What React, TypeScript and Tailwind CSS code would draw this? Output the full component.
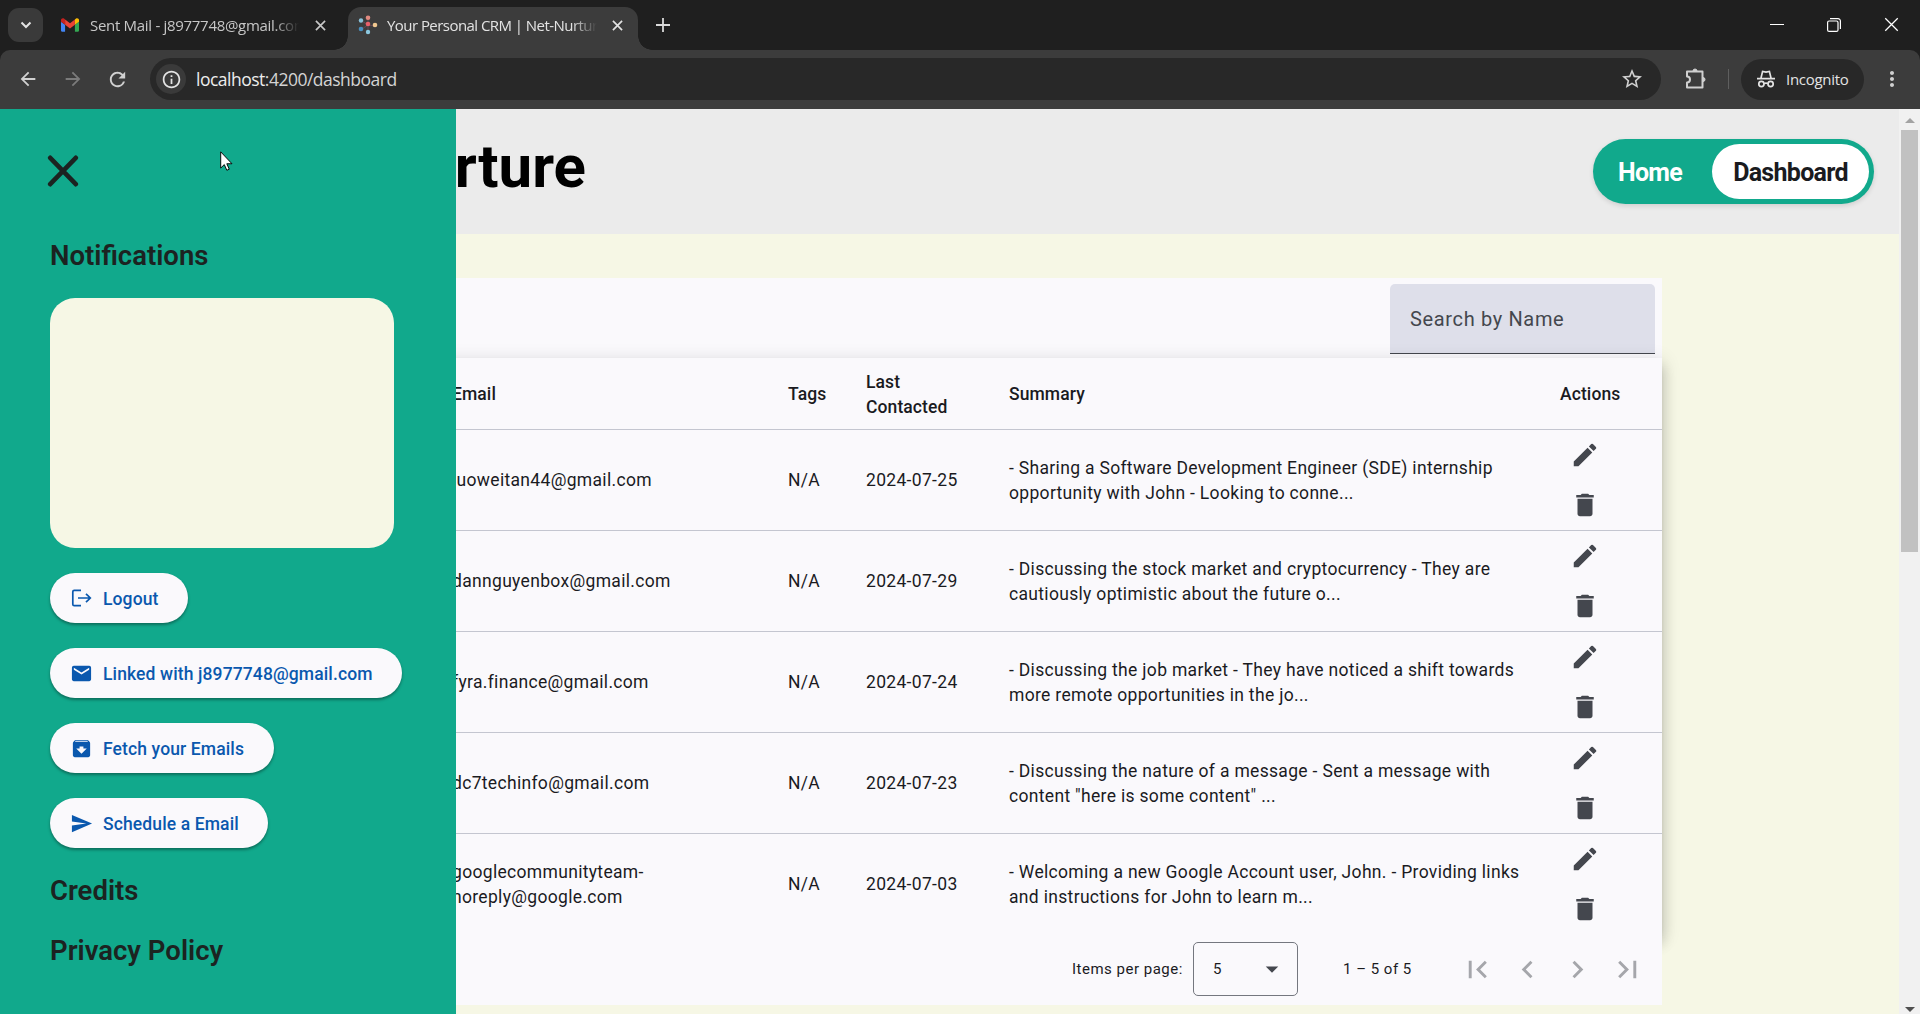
import type { ReactNode } from "react";
import {
  MdArchive, MdArrowBack, MdArrowDropDown, MdArrowForward, MdChevronLeft, MdChevronRight, MdDelete,
  MdEdit, MdEmail, MdFirstPage, MdInfoOutline, MdLastPage, MdMoreVert,
  MdRefresh, MdSend, MdStarBorder,
} from "react-icons/md";

const contacts = [
  { email: ["luoweitan44@gmail.com"], date: "2024-07-25", summary: ["- Sharing a Software Development Engineer (SDE) internship", "opportunity with John - Looking to conne..."] },
  { email: ["dannguyenbox@gmail.com"], date: "2024-07-29", summary: ["- Discussing the stock market and cryptocurrency - They are", "cautiously optimistic about the future o..."] },
  { email: ["fyra.finance@gmail.com"], date: "2024-07-24", summary: ["- Discussing the job market - They have noticed a shift towards", "more remote opportunities in the jo..."] },
  { email: ["dc7techinfo@gmail.com"], date: "2024-07-23", summary: ["- Discussing the nature of a message - Sent a message with", "content \"here is some content\" ..."] },
  { email: ["googlecommunityteam-", "noreply@google.com"], date: "2024-07-03", summary: ["- Welcoming a new Google Account user, John. - Providing links", "and instructions for John to learn m..."] },
];

function Cross({ className }: { className: string }) {
  return (
    <svg viewBox="0 0 12 12" className={className} fill="none" stroke="currentColor">
      <path d="M1 1l10 10M11 1L1 11" />
    </svg>
  );
}

function GmailLogo() {
  return (
    <svg viewBox="52 42 88 66" className="h-[14px] w-[18px] shrink-0">
      <path fill="#4285f4" d="M58 108h14V74L52 59v43c0 3.32 2.69 6 6 6" />
      <path fill="#34a853" d="M120 108h14c3.32 0 6-2.69 6-6V59l-20 15" />
      <path fill="#fbbc04" d="M120 48v26l20-15v-8c0-7.42-8.47-11.65-14.4-7.2" />
      <path fill="#ea4335" d="M72 74V48l24 18 24-18v26L96 92" />
      <path fill="#c5221f" d="M52 51v8l20 15V48l-5.6-4.2c-5.94-4.45-14.4-.22-14.4 7.2" />
    </svg>
  );
}

function NetworkLogo() {
  return (
    <svg viewBox="0 0 20 20" className="h-5 w-5 shrink-0">
      <path d="M10 10L10 3M10 10L16.5 11M10 10L10 17M10 10L4 14M10 10L4 6" stroke="#7a4a5c" strokeWidth=".7" />
      <circle cx="10" cy="2.7" r="2.3" fill="#e08a80" />
      <circle cx="3" cy="5.5" r="2.2" fill="#8cc4dc" />
      <circle cx="10" cy="9" r="2.3" fill="#e8606a" />
      <circle cx="17" cy="10" r="2.3" fill="#f0c890" />
      <circle cx="3" cy="14" r="2.3" fill="#4a90bf" />
      <circle cx="10" cy="17" r="2.2" fill="#8cc8e0" />
    </svg>
  );
}

function IncognitoIcon() {
  return (
    <svg viewBox="0 0 18 18" className="h-[18px] w-[18px]" fill="none" stroke="#e3e3e3" strokeWidth="1.7">
      <path d="M0 8.6h18M4 8L5.6 1.4 9 2.2l3.4-.8L14 8" />
      <circle cx="4.4" cy="14" r="2.6" />
      <circle cx="13.6" cy="14" r="2.6" />
      <path d="M7 13.6q2-1 4 0" />
    </svg>
  );
}

function PuzzleIcon() {
  return (
    <svg viewBox="0 0 22 22" className="ml-[24px] h-[22px] w-[22px]" fill="none" stroke="#d0d0d0" strokeWidth="2" strokeLinejoin="round">
      <path d="M2 3.5h15.5v16H2v-5a3 3 0 0 0 0-6z" />
      <path d="M8 3a2 2 0 0 1 4 0zM18 9.5a2 2 0 0 1 0 4z" fill="#d0d0d0" strokeWidth="1" />
    </svg>
  );
}

function LogoutIcon() {
  return (
    <svg viewBox="0 0 23 23" className="h-[23px] w-[23px] shrink-0" fill="none" stroke="currentColor" strokeWidth="1.7">
      <path d="M11 3.3H4.2a1.4 1.4 0 0 0-1.4 1.4v12.6a1.4 1.4 0 0 0 1.4 1.4H11" />
      <path d="M8 11h12.3M16 6.8l4.3 4.2-4.3 4.2" />
    </svg>
  );
}

function BrowserChrome() {
  return (
    <header className="bg-[#1f1f1f] font-['Open_Sans','Noto_Sans',sans-serif]">
      <div className="flex h-[50px] items-start pl-2 text-[15px] tracking-[-0.3px] text-[#c7c7c7]">
        <div className="mt-2 flex h-[34px] w-[35px] items-center justify-center rounded-[11px] bg-[#3a3a3a]">
          <svg viewBox="0 0 12 8" className="h-2 w-3" fill="none" stroke="#e3e3e3" strokeWidth="2"><path d="M1.5 1.5L6 6l4.5-4.5" /></svg>
        </div>
        <div className="ml-[18px] flex h-[50px] w-[287px] items-center">
          <GmailLogo />
          <span className="ml-[11px] w-[209px] overflow-hidden whitespace-nowrap [mask-image:linear-gradient(to_right,black_88%,transparent)]">Sent Mail - j8977748@gmail.com</span>
          <Cross className="ml-[16px] h-[11px] w-[11px] stroke-[1.8]" />
        </div>
        <div className="relative mt-[7px] flex h-[43px] w-[290px] items-center rounded-t-[13px] bg-[#3c3c3c] pb-[7px] pl-[10px] text-[#e3e3e3]">
          <span className="absolute bottom-0 -left-[14px] h-[14px] w-[14px] bg-[radial-gradient(circle_at_0_0,#1f1f1f_13.5px,#3c3c3c_14px)]" />
          <span className="absolute -right-[14px] bottom-0 h-[14px] w-[14px] bg-[radial-gradient(circle_at_100%_0,#1f1f1f_13.5px,#3c3c3c_14px)]" />
          <NetworkLogo />
          <span className="ml-[9px] w-[210px] overflow-hidden tracking-[-0.55px] whitespace-nowrap [mask-image:linear-gradient(to_right,black_88%,transparent)]">Your Personal CRM | Net-Nurture</span>
          <Cross className="ml-[15px] h-[11px] w-[11px] stroke-[1.8]" />
        </div>
        <svg viewBox="0 0 14 14" className="mt-[18px] ml-[18px] h-[14px] w-[14px]" stroke="#dadada" strokeWidth="1.8"><path d="M7 0v14M0 7h14" /></svg>
        <div className="mt-[17px] mr-[21px] ml-auto flex items-center gap-[43px] text-white">
          <span className="h-px w-[14px] bg-white" />
          <svg viewBox="0 0 14 14" className="h-[14px] w-[14px]" fill="none" stroke="currentColor" strokeWidth="1.2">
            <rect x="0.6" y="3" width="10.4" height="10.4" rx="1.5" />
            <path d="M3 .7h8a2.4 2.4 0 0 1 2.4 2.4v8" />
          </svg>
          <Cross className="h-[15px] w-[15px] stroke-1" />
        </div>
      </div>
      <div className="flex h-[59px] items-center rounded-t-[10px] bg-[#3c3c3c] pb-px text-[#d0d0d0]">
        <MdArrowBack className="ml-[17px] h-[22px] w-[22px]" />
        <MdArrowForward className="ml-[23px] h-[22px] w-[22px] text-[#7b7b7b]" />
        <MdRefresh className="ml-[22px] h-[23px] w-[23px]" />
        <div className="ml-[21px] flex h-[42px] w-[1511px] items-center rounded-full bg-[#282828]">
          <span className="ml-[6px] flex h-[30px] w-[30px] items-center justify-center rounded-full bg-[#3a3a3a]">
            <MdInfoOutline className="h-[21px] w-[21px] text-[#e3e3e3]" />
          </span>
          <span className="ml-[10px] text-[17.5px] tracking-[-0.5px] text-[#d4d4d4]"><span className="text-[#ededed]">localhost</span>:4200/dashboard</span>
          <MdStarBorder className="mr-[17px] ml-auto h-6 w-6" />
        </div>
        <PuzzleIcon />
        <span className="ml-[21px] h-5 w-px bg-[#5f5f5f]" />
        <div className="ml-3 flex h-[41px] w-[123px] items-center rounded-full bg-[#282828] pl-4">
          <IncognitoIcon />
          <span className="ml-[11px] text-[15px] tracking-[-0.3px] text-[#e3e3e3]">Incognito</span>
        </div>
        <MdMoreVert className="ml-4 h-6 w-6" />
      </div>
    </header>
  );
}

function DrawerButton({ icon, width, children }: { icon: ReactNode; width: string; children: ReactNode }) {
  return (
    <button className={`flex h-[50px] items-center rounded-full bg-[#faf9fc] pl-[20px] text-[17.5px] font-medium tracking-[0.12px] whitespace-nowrap text-[#0a58ae] shadow-[0_2px_3px_rgba(0,0,0,0.35)] ${width}`}>
      {icon}
      <span className="ml-[10px] pt-[2px]">{children}</span>
    </button>
  );
}

function Drawer() {
  return (
    <aside className="absolute top-0 left-0 flex h-full w-[456px] flex-col bg-[#11a98c] pl-[50px] text-[#1c2321]">
      <svg viewBox="0 0 32 32" className="mt-[46px] -ml-[3px] h-8 w-8" strokeWidth="4.6" stroke="#1c2321" strokeLinecap="round"><path d="M3.2 2.8l25.6 26.4M28.8 2.8L3.2 29.2" /></svg>
      <h2 className="mt-[51px] text-[27.5px] leading-[35px] font-semibold">Notifications</h2>
      <div className="mt-[25px] h-[250px] w-[344px] shrink-0 rounded-[25px] bg-[#f6f7e5]" />
      <div className="mt-[25px] flex flex-col gap-[25px]">
        <DrawerButton width="w-[138px]" icon={<LogoutIcon />}>Logout</DrawerButton>
        <DrawerButton width="w-[352px]" icon={<MdEmail className="h-[23px] w-[23px] shrink-0" />}>Linked with j8977748@gmail.com</DrawerButton>
        <DrawerButton width="w-[224px]" icon={<MdArchive className="h-[23px] w-[23px] shrink-0" />}>Fetch your Emails</DrawerButton>
        <DrawerButton width="w-[218px]" icon={<MdSend className="h-[23px] w-[23px] shrink-0" />}>Schedule a Email</DrawerButton>
      </div>
      <h2 className="mt-[25px] text-[27.5px] leading-[35px] font-semibold">Credits</h2>
      <h2 className="mt-[25px] text-[27.5px] leading-[35px] font-semibold">Privacy Policy</h2>
    </aside>
  );
}

function ContactsTable() {
  return (
    <div className="relative bg-[#faf9fc] text-[17.5px] leading-[25px] text-[#1a1b1f] shadow-[0_6px_6px_-4px_rgba(0,0,0,0.2),0_10px_12px_1px_rgba(0,0,0,0.14),0_4px_17px_2px_rgba(0,0,0,0.12)]">
      <div className="grid h-[72px] grid-cols-[336px_78px_143px_551px_102px] items-center border-b border-[#c4c6d0] pt-[2px] pl-[452px] font-medium tracking-[0.1px]">
        <span>Email</span>
        <span>Tags</span>
        <span>Last<br />Contacted</span>
        <span>Summary</span>
        <span>Actions</span>
      </div>
      {contacts.map((c, i) => (
        <div key={c.date} className={`grid grid-cols-[336px_78px_143px_551px_102px] items-center pl-[452px] whitespace-nowrap tracking-[0.32px] ${i < 4 ? "h-[101px] border-b border-[#c4c6d0]" : "h-[100px]"}`}>
          <span className={c.email.length > 1 ? "pt-px" : ""}>{c.email.map((l) => <span key={l} className="block">{l}</span>)}</span>
          <span>N/A</span>
          <span>{c.date}</span>
          <span className="pt-px">{c.summary.map((l) => <span key={l} className="block">{l}</span>)}</span>
          <span className="flex flex-col gap-5 pl-[10px] text-[#44474e]">
            <MdEdit className="h-[30px] w-[30px]" />
            <MdDelete className="h-[30px] w-[30px]" />
          </span>
        </div>
      ))}
    </div>
  );
}

function Paginator() {
  return (
    <div className="relative flex h-[71px] items-center bg-[#faf9fc] pb-px text-[15px] tracking-[0.5px] text-[#1a1b1f]">
      <span className="ml-[1072px] w-[121px] whitespace-nowrap">Items per page:</span>
      <div className="flex h-[54px] w-[105px] items-center justify-between rounded-[5px] border border-[#74777f] pr-[10px] pl-[19px]">
        <span>5</span>
        <MdArrowDropDown className="h-[30px] w-[30px] text-[#44474e]" />
      </div>
      <span className="ml-[45px] w-[117px] whitespace-nowrap">1 – 5 of 5</span>
      <div className="flex gap-[15px] text-[#a5a6ab]">
        <MdFirstPage className="h-[35px] w-[35px]" />
        <MdChevronLeft className="h-[35px] w-[35px]" />
        <MdChevronRight className="h-[35px] w-[35px]" />
        <MdLastPage className="h-[35px] w-[35px]" />
      </div>
    </div>
  );
}

function Scrollbar() {
  return (
    <div className="flex w-[21px] shrink-0 flex-col items-center bg-[#f1f1f1]">
      <svg viewBox="0 0 10 5" className="mt-[9px] mb-[7px] h-[5px] w-[10px] fill-[#a3a3a3]"><path d="M0 5l5-5 5 5z" /></svg>
      <div className="h-[422px] w-[17px] bg-[#c1c1c1]" />
      <svg viewBox="0 0 10 5" className="mt-auto mb-[2px] h-[5px] w-[10px] fill-[#505050]"><path d="M0 0l5 5 5-5z" /></svg>
    </div>
  );
}

export default function App() {
  return (
    <div className="flex h-[1014px] w-[1920px] flex-col overflow-hidden">
      <BrowserChrome />
      <div className="relative flex min-h-0 flex-1 bg-[#f6f7e5] font-['Roboto',sans-serif]">
        <main className="min-w-0 flex-1">
          <div className="flex h-[125px] items-start justify-between bg-[#ebebeb]">
            <h1 className="w-[586px] pt-[22px] text-right text-[60px] leading-[72px] font-bold text-black">Net-Nurture</h1>
            <nav className="mt-[30px] mr-[25px] flex h-[65px] w-[281px] items-center rounded-full bg-[#11a98c] pl-[25px] text-[25px] font-bold tracking-[-0.7px] text-white shadow-[0_2px_5px_rgba(0,0,0,0.12)]">
              <span className="w-[94px] pt-[2px]">Home</span>
              <span className="flex h-[55px] w-[157px] items-center justify-center rounded-full bg-white pt-[2px] text-[#1a1b1f]">Dashboard</span>
            </nav>
          </div>
          <div className="mt-[44px] w-[1662px]">
            <div className="flex h-20 justify-end bg-[#faf9fc] pt-[6px] pr-[7px]">
              <label className="flex h-[70px] w-[265px] items-center rounded-t-[5px] border-b border-[#44474e] bg-[#dedfea] pl-5 text-[20px] tracking-[0.65px] text-[#44474e]">Search by Name</label>
            </div>
            <ContactsTable />
            <Paginator />
          </div>
        </main>
        <Scrollbar />
        <Drawer />
        <svg viewBox="0 0 12 19" className="absolute top-[42px] left-[220px] h-[20px] w-[13px]"><path d="M.5.8v15.4l3.4-3.3 2.4 5.4 2.3-1-2.3-5.2h4.9z" fill="white" stroke="black" strokeWidth=".9" /></svg>
      </div>
    </div>
  );
}
